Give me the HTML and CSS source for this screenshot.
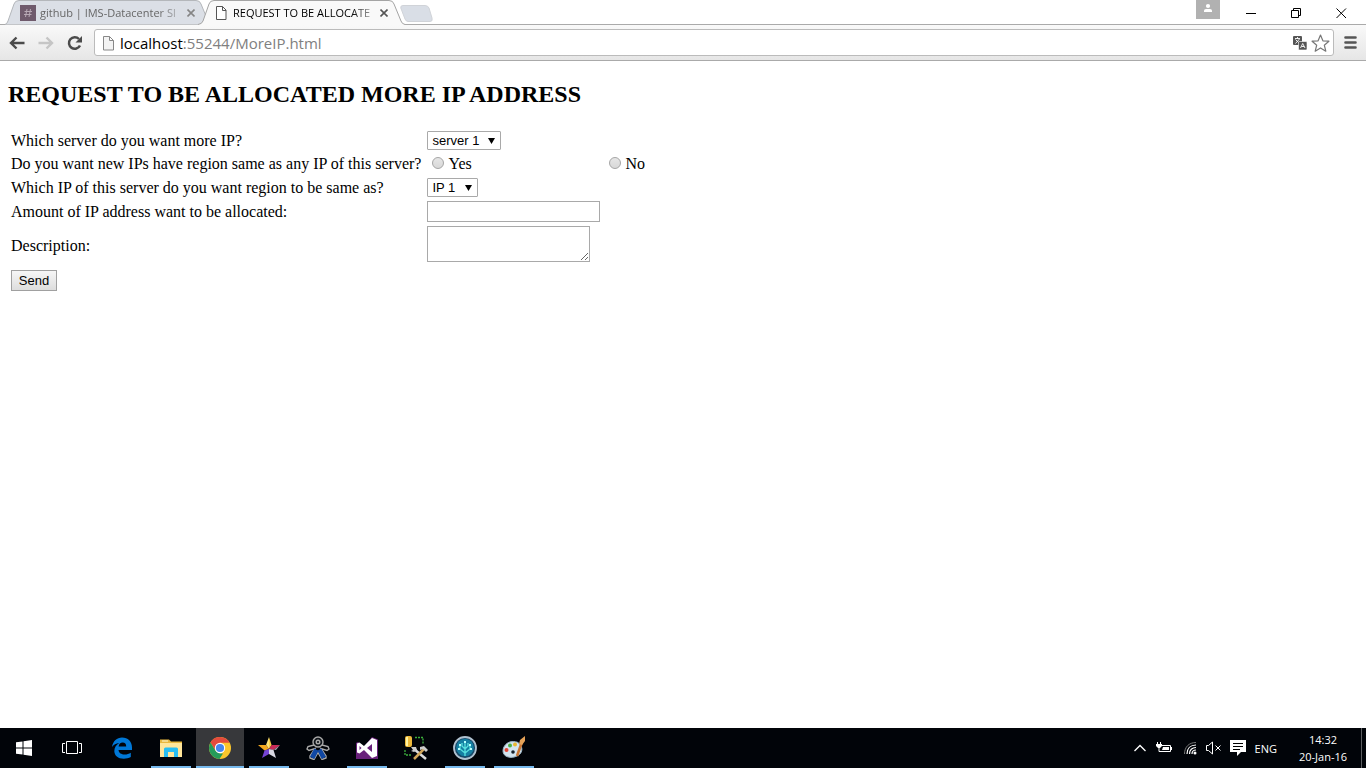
FILE: index.html
```html
<!DOCTYPE html>
<html lang="en">
<head>
<meta charset="utf-8">
<title>REQUEST TO BE ALLOCATED MORE IP ADDRESS</title>
<link rel="stylesheet" href="styles.css">
</head>
<body>
<header class="tabstrip">
  <div class="tabs">
    <div class="tab">
      <svg class="tab-shape" viewBox="0 0 208 25" aria-hidden="true"><path d="M0 24.500Q2 24 3 21L9 4Q10 .5 14 .5H191Q195 .5 196 4L203 21Q204 24 207 24.500" fill="#dbdfe6" stroke="#b4b7bb"/></svg>
      <svg class="tab-icon" viewBox="0 0 16 16" aria-hidden="true"><path fill="#6f5a6c" d="M0 0h16v16H0z"/><path d="M7 4L5.500 12M10.500 4L9 12M4.500 6.500h7.500M4 9.500h7.500" stroke="#b8a9b5" fill="none"/></svg>
      <span class="tab-title tab-title-muted">github | IMS-Datacenter Sl</span>
      <button class="tab-close" aria-label="Close tab"><svg viewBox="0 0 8 8"><path d="M.5.5l7 7M7.500.5l-7 7" stroke="#858585" stroke-width="1.600"/></svg></button>
    </div>
    <div class="tab tab-active">
      <svg class="tab-shape" viewBox="0 0 208 25" aria-hidden="true"><path d="M0 24.500Q4 24 5 21L11 4Q12 .5 16 .5H191Q195 .5 196 4L203 21Q204 24 207 24.500V25H0z" fill="#f9f9f9"/><path d="M0 24.500Q4 24 5 21L11 4Q12 .5 16 .5H191Q195 .5 196 4L203 21Q204 24 207 24.500" fill="none" stroke="#a4a4a4"/></svg>
      <svg class="tab-icon" viewBox="0 0 16 16" aria-hidden="true"><path d="M3.500 1.500h6l3.500 3.500v9.500h-9.500zM9.500 1.500v4H13" fill="#fff" stroke="#555"/></svg>
      <span class="tab-title">REQUEST TO BE ALLOCATE</span>
      <button class="tab-close" aria-label="Close tab"><svg viewBox="0 0 8 8"><path d="M.5.5l7 7M7.500.5l-7 7" stroke="#555" stroke-width="1.600"/></svg></button>
    </div>
    <button class="new-tab" aria-label="New tab"><svg viewBox="0 0 33 17"><path d="M3 .5H25Q28 .5 29 3L32 13Q33 16.500 30 16.500H8Q6 16.500 5 14L.8 3Q.3.5 3 .5z" fill="#d9dee6" stroke="#d0d3d8"/></svg></button>
  </div>
  <div class="window-controls">
    <button class="profile" aria-label="Profile"><svg width="24" height="19" viewBox="0 0 24 19"><circle cx="12" cy="6" r="2.100" fill="#fff"/><path d="M8 12V10.500Q8 9 10 9h4q2 0 2 1.500V12z" fill="#fff"/></svg></button>
    <button class="win-button" aria-label="Minimize"><svg width="12" height="12"><path d="M1 6.500h10" stroke="#000"/></svg></button>
    <button class="win-button" aria-label="Restore"><svg width="12" height="12" fill="none" stroke="#000"><path d="M1.500 3.500h7v7h-7zM3.500 3V1.500h7v7H9"/></svg></button>
    <button class="win-button" aria-label="Close"><svg width="12" height="12"><path d="M1.500 1.500l9.500 9.500M11 1.500L1.500 11" stroke="#000"/></svg></button>
  </div>
</header>
<nav class="toolbar" aria-label="Browser toolbar">
  <button class="nav-button" aria-label="Back"><svg width="16" height="14" fill="none" stroke="#4b4b4b" stroke-width="2.400"><path d="M15.500 7H2M7.500 1.500L2 7l5.500 5.500"/></svg></button>
  <button class="nav-button" aria-label="Forward"><svg width="16" height="14" fill="none" stroke="#c5c5c5" stroke-width="2.400"><path d="M.5 7H14M8.500 1.500L14 7l-5.500 5.500"/></svg></button>
  <button class="nav-button" aria-label="Reload"><svg width="16" height="16"><path d="M13 10.500A5.800 5.800 0 1 1 12 4" fill="none" stroke="#4b4b4b" stroke-width="2.500"/><path d="M15 1v6.500H8.500z" fill="#4b4b4b"/></svg></button>
  <div class="omnibox">
    <svg class="page-icon" width="13" height="16" viewBox="0 0 13 16" aria-hidden="true"><path d="M1.500 1.500h6l4 4v9.500h-10zM7.500 1.500v4h4" fill="#f3f3f3" stroke="#888"/></svg>
    <div class="address" role="textbox" aria-label="Address" tabindex="0">localhost<span class="address-path">:55244/MoreIP.html</span></div>
    <button class="omni-button" aria-label="Translate"><svg width="14" height="14"><rect width="9" height="9" rx="1" fill="#555"/><path d="M2 2.500h5M4.500 1v1.500M2.500 7.500l4-4.500M2.500 3.500l4 4" stroke="#fff" fill="none" stroke-width=".9"/><rect x="5.500" y="5.500" width="8.500" height="8.500" rx="1" fill="#555" stroke="#fff" stroke-width=".6"/><path d="M7.500 12l2.200-4.500L12 12M8.500 10.500h2.700" stroke="#fff" fill="none" stroke-width=".9"/></svg></button>
    <button class="omni-button" aria-label="Bookmark"><svg width="19" height="18"><path d="M9.500 1l2.400 5.800 6 .4-4.600 4 1.500 6-5.300-3.300-5.300 3.300 1.500-6-4.600-4 6-.4z" fill="#fff" stroke="#777" stroke-width="1.200" stroke-linejoin="round"/></svg></button>
  </div>
  <button class="menu-button" aria-label="Menu"><svg width="13" height="13" stroke="#555" stroke-width="2.600" stroke-linecap="round"><path d="M1.500 1.500h10M1.500 6.500h10M1.500 11.500h10"/></svg></button>
</nav>
<main class="page">
  <h2 class="page-title">REQUEST TO BE ALLOCATED MORE IP ADDRESS</h2>
  <form>
    <table class="form-table">
      <tr>
        <td><label for="server">Which server do you want more IP?</label></td>
        <td><select id="server" class="select select-server"><option>server 1</option></select></td>
        <td></td>
      </tr>
      <tr class="radio-row">
        <td>Do you want new IPs have region same as any IP of this server?</td>
        <td><label class="choice"><input class="radio" type="radio" name="region">Yes</label></td>
        <td><label class="choice"><input class="radio" type="radio" name="region">No</label></td>
      </tr>
      <tr>
        <td><label for="ip">Which IP of this server do you want region to be same as?</label></td>
        <td><select id="ip" class="select select-ip"><option>IP 1</option></select></td>
        <td></td>
      </tr>
      <tr>
        <td><label for="amount">Amount of IP address want to be allocated:</label></td>
        <td><input id="amount" class="amount" type="text"></td>
        <td></td>
      </tr>
      <tr>
        <td><label for="description">Description:</label></td>
        <td><textarea id="description" class="description"></textarea></td>
        <td></td>
      </tr>
      <tr>
        <td><button class="send" type="button">Send</button></td>
        <td></td>
        <td></td>
      </tr>
    </table>
  </form>
</main>
<footer class="taskbar">
  <div class="apps">
    <button class="app" aria-label="Start"><svg width="16" height="16" fill="#fff"><path d="M0 2.300l6.500-.9v6.100H0zM7.500 1.200L16 0v7.500H7.500zM0 8.500h6.500v6.100L0 13.700zM7.500 8.500H16V16l-8.500-1.200z"/></svg></button>
    <button class="app" aria-label="Task view"><svg width="22" height="16" fill="none" stroke="#fff"><path d="M4.500 1.500h11v12h-11zM3 3.500H.5v9H3M17 3.500h2.500v9H17"/></svg></button>
    <button class="app" aria-label="Edge"><svg width="22" height="22"><path d="M1 10C2 4 6 .5 11 .5c6 0 10 4 10 10V13H7.500c.3 3 3 4.500 6 4.500 2.500 0 4.500-.7 6.300-1.800V20c-2 1.200-4.500 1.700-7 1.700C7 21.700 3.300 18.500 3.300 14c0-3.500 2-6.500 5-8C5 6.300 2.500 8 1 10zM7.600 9.500h7.600C15.200 7 14 5.500 11.700 5.500 9.500 5.500 8 7 7.600 9.500z" fill="#0078d7"/></svg></button>
    <button class="app app-running" aria-label="File Explorer"><svg width="24" height="22"><path d="M1 2.500h9l2 2h11V20H1z" fill="#e9b83f"/><path d="M1 6h22v14H1z" fill="#ffe59a"/><path d="M3 4h6" stroke="#fff6cf"/><path d="M5 20v-8q0-1.500 1.500-1.500h11q1.500 0 1.500 1.500v8h-4v-5H9v5z" fill="#27bdf2"/></svg></button>
    <button class="app app-running app-current" aria-label="Chrome"><svg width="22" height="22"><circle cx="11" cy="11" r="11" fill="#fbc62c"/><path d="M1.500 5.500A11 11 0 0 1 20.600 5.800H11L6.500 13.600z" fill="#e34b3d"/><path d="M1.500 5.500L6.600 13.800 11 16.500l3 0L10.500 22A11 11 0 0 1 1.500 5.500z" fill="#259b5a"/><circle cx="11" cy="11" r="5.200" fill="#fff"/><circle cx="11" cy="11" r="4.100" fill="#4586ef"/></svg></button>
    <button class="app app-running" aria-label="Star"><svg width="22" height="22"><path d="M11 0l2.600 8L11 12z" fill="#f8cf45"/><path d="M11 0L8 8l3 4z" fill="#ffe477"/><path d="M8 8H0l6.500 5.500L11 12z" fill="#f4a91f"/><path d="M13.600 8H22l-6.500 5L11 12z" fill="#c82c57"/><path d="M15.500 13L18 21l-7-4v-5z" fill="#d8d8e3"/><path d="M6.500 13.500L4 21l7-4v-5z" fill="#7545d6"/><path d="M11 12l4.500 1L22 8l-4 5z" fill="#a5a0a8"/></svg></button>
    <button class="app" aria-label="Robot"><svg width="24" height="24" fill="none" stroke="#aaa" stroke-width="1.400"><path d="M8 9L2 10.500 1 13l2 1.500 6-2L4 20v2l4 1.500 4-7 4 7 4-1.500v-2l-5-7.500 6 2 2-1.500-1-2.500-6-1.500"/><path d="M8.500 13.500L5 20.500l3 1.500 3.500-7zM15 13.500l4 7-3 1.500-3.500-7z" fill="#1048a4" stroke="#1048a4"/><circle cx="12" cy="6" r="5" fill="#10151a"/><circle cx="12" cy="6" r="1.800"/></svg></button>
    <button class="app app-running" aria-label="Visual Studio"><svg width="22" height="24"><path d="M0 7l2-1 6 4.500L16 1l6 2.500V23H0z" fill="#68217a"/><path d="M1 7.500l2.500-1L8 10l8-8 5 2v16l-5 2-8-8-4.500 3.500-2.500-1zM3.500 10v4l2-2zM11 12l5 4V8z" fill="#fff" fill-rule="evenodd"/></svg></button>
    <button class="app" aria-label="Database tools"><svg width="24" height="24"><path d="M11 1.500h8v7M1 14v5h7" fill="none" stroke="#3cae3c" stroke-width="1.300" stroke-dasharray="2 1"/><rect x="1" y="0" width="7" height="11" rx="2" fill="#ecb93c"/><path d="M3 1v9" stroke="#fff3a1" stroke-width="2"/><path d="M10 13l12 10" stroke="#ddd" stroke-width="2.500"/><path d="M20 13L10 23" stroke="#d3a75a" stroke-width="2.500"/><path d="M7 11l5 0 1 3-3 2-3-1 2-1zM16 11l4-1 4 4-2 2-3-3-3 1z" fill="#ccc"/></svg></button>
    <button class="app app-running" aria-label="SourceTree"><svg width="24" height="24"><circle cx="12" cy="12" r="11" fill="#174969" stroke="#b0c2d0" stroke-width="1.800"/><circle cx="12" cy="11.500" r="8.800" fill="#157fa2"/><path d="M12 20V6M12 17l-5-4V9M12 17l5-4V9M12 13L9 10V7M12 13l3-3V7" fill="none" stroke="#57e0df" stroke-width="1.300"/><path d="M12 5v2M7 8v2M17 8v2M5 13h2M17 13h2" stroke="#b6ffff" stroke-width="2"/></svg></button>
    <button class="app app-running" aria-label="Paint"><svg width="24" height="24"><path d="M14 6C7 4 1 9 1 15c0 6 8 8 14 5 7-3 6-11 0-14z" fill="#d3e5f0" stroke="#9db6c6"/><circle cx="4.500" cy="14" r="2" fill="#df4434"/><circle cx="8" cy="9.500" r="2" fill="#4aae45"/><circle cx="13" cy="8.500" r="2" fill="#eab72f"/><circle cx="11" cy="16" r="1.800" fill="#15212b"/><path d="M20 6L15 20" stroke="#c87532" stroke-width="2.600"/><path d="M23 0l-5 4-1 4 3 1 3-4z" fill="#e5a258"/></svg></button>
  </div>
  <div class="tray">
    <svg width="12" height="8" aria-label="Show hidden icons"><path d="M.5 7L6 1.500 11.500 7" fill="none" stroke="#fff" stroke-width="1.300"/></svg>
    <svg width="16" height="14" aria-label="Battery"><path d="M5 4.500h9.500v6H4.500M15.500 6v3M1.500 1v3M4.500 1v3M3 7v3.500h2" fill="none" stroke="#fff"/><path d="M0 3h6v2L4 7H2L0 5zM7 6h6v3H6z" fill="#fff"/></svg>
    <svg class="wifi" width="14" height="14" fill="none" aria-label="Network"><path d="M1.500 13C1.500 6 6 1.500 13 1.500" stroke="#777"/><path d="M4 13c0-5.500 3.500-9 9-9M6.500 13c0-4 2.500-6.500 6.500-6.500M9 13c0-2.500 1.500-4 4-4" stroke="#fff" stroke-width="1.200"/><circle cx="12" cy="12" r="1.500" fill="#fff"/></svg>
    <svg width="15" height="14" fill="none" stroke="#fff" aria-label="Muted"><path d="M.5 4.500h2l4-3.500v12L2.500 9.500h-2zM9.500 4.500l5 5M14.500 4.500l-5 5"/></svg>
    <svg width="16" height="16" aria-label="Notifications"><path d="M0 0h16v12h-5l-4 4v-4H0z" fill="#fff"/><path d="M3 3.500h10M3 6.500h10M3 9.500h7" stroke="#000"/></svg>
    <span class="language">ENG</span>
    <div class="clock"><span>14:32</span><span>20-Jan-16</span></div>
    <div class="show-desktop"></div>
  </div>
</footer>
</body>
</html>
```
FILE: styles.css
```css
* { box-sizing: border-box; }
body {
  margin: 0;
  min-height: 100vh;
  display: flex;
  flex-direction: column;
  background: #fff;
  color: #000;
  font-family: "Liberation Serif", "Times New Roman", serif;
  font-size: 16px;
}
svg { display: block; flex: none; }
button { padding: 0; border: 0; background: none; }

.tabstrip, .toolbar, .taskbar { font-family: "Open Sans", "Noto Sans", sans-serif; flex: none; }

.tabstrip { display: flex; justify-content: space-between; height: 24px; }
.tabs { display: flex; align-items: flex-start; padding-left: 5px; }
.tab {
  position: relative;
  display: flex;
  align-items: center;
  width: 208px;
  height: 25px;
  padding-left: 15px;
  margin-right: -15px;
}
.tab-active { z-index: 2; }
.tab-shape { position: absolute; inset: 0; width: 100%; height: 25px; }
.tab-icon { position: relative; width: 16px; height: 16px; }
.tab-title {
  position: relative;
  width: 143px;
  margin-left: 4px;
  white-space: nowrap;
  font-size: 11px;
  line-height: 16px;
  mask-image: linear-gradient(to right, #000 118px, transparent 150px);
}
.tab-title-muted { color: #666; }
.tab-close { position: relative; width: 8px; height: 8px; margin-left: 4px; }
.new-tab { width: 33px; height: 17px; margin: 5px 0 0 9px; }

.window-controls { display: flex; align-items: flex-start; padding-right: 3px; }
.profile { width: 24px; height: 19px; margin-right: 8px; background: #b1b1b1; }
.win-button { display: flex; justify-content: center; align-items: center; width: 45px; height: 26px; }

.toolbar {
  display: flex;
  align-items: center;
  height: 37px;
  padding: 0 9px 0 7px;
  border-top: 1px solid #aaa;
  border-bottom: 1px solid #aaa;
  background: linear-gradient(#f9f9f9, #e6e6e6);
}
.nav-button { display: flex; justify-content: center; width: 20px; margin-right: 9px; }
.omnibox {
  flex: 1;
  display: flex;
  align-items: center;
  height: 27px;
  padding: 0 3px 0 7px;
  margin-right: 10px;
  border: 1px solid #bbb;
  border-radius: 3px;
  background: #fff;
}
.address { flex: 1; margin-left: 5px; font-size: 15px; line-height: 20px; outline: 0; }
.address-path { color: #808080; }
.omni-button { margin-left: 4px; }

.page { flex: 1; padding: 20px 8px; }
.page-title { margin: 0 0 20px; font-size: 24px; line-height: 27px; font-weight: bold; }
.form-table { border-spacing: 2px; }
.form-table td { padding: 1px; line-height: 18px; }
.form-table td:first-child { padding-right: 3px; }
.radio-row { height: 22px; }
.select, .amount, .description, .send {
  display: block;
  font-family: "Liberation Sans", Arial, sans-serif;
  font-size: 13px;
}
.select {
  appearance: none;
  height: 19px;
  padding: 0 4px;
  border: 1px solid #a9a9a9;
  border-radius: 1px;
  color: #000;
  background: #fff url("data:image/svg+xml,%3Csvg xmlns='http://www.w3.org/2000/svg' width='7' height='6'%3E%3Cpath d='M0 0h7L3.500 6z'/%3E%3C/svg%3E") no-repeat right 5px center;
}
.select-server { width: 74px; }
.select-ip { width: 51px; }
.choice { display: flex; align-items: center; line-height: 20px; }
.radio {
  appearance: none;
  width: 12px;
  height: 12px;
  margin: 0 4px 2px 5px;
  border: 1px solid #a5a5a5;
  border-radius: 50%;
  background: linear-gradient(#e6e6e6, #d8d8d8);
}
.radio:checked { background: radial-gradient(#444 3px, #ddd 4px); }
.amount { width: 173px; height: 21px; border: 1px solid #a9a9a9; }
.description { width: 163px; height: 36px; margin-bottom: 4px; border: 1px solid #a9a9a9; resize: both; }
.send {
  width: 46px;
  height: 21px;
  border: 1px solid #a0a0a0;
  color: #000;
  background: linear-gradient(#f6f6f6, #ddd);
}

.taskbar { display: flex; justify-content: space-between; height: 40px; background: #010409; color: #fff; }
.apps { display: flex; gap: 1px; }
.app { position: relative; display: flex; align-items: center; justify-content: center; width: 48px; height: 40px; }
.app-current { background: #37383b; }
.app-running::after { content: ""; position: absolute; left: 4px; right: 4px; bottom: 0; height: 2px; background: #76b9ed; }
.app-current::after { left: 0; right: 0; }
.tray { display: flex; align-items: center; gap: 10px; font-size: 12px; }
.wifi { margin-left: 2px; }
.tray svg + svg { margin-right: -1px; }
.language { font-size: 11px; }
.clock { display: flex; flex-direction: column; align-items: center; width: 72px; font-size: 11px; line-height: 17px; }
.show-desktop { width: 5px; height: 40px; margin-left: -8px; border-left: 1px solid #5c5e61; }
```
